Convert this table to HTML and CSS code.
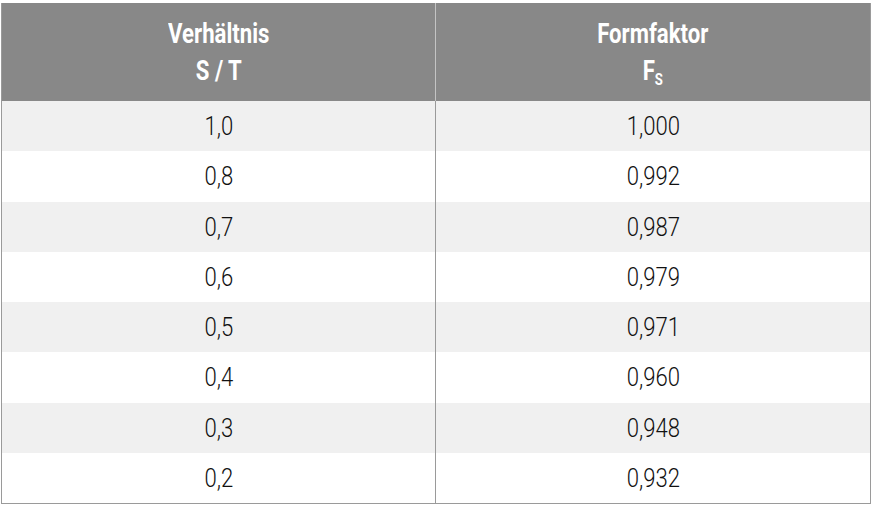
FILE: index.html
```html
<!DOCTYPE html>
<html lang="de">
<head>
<meta charset="utf-8">
<title>Formfaktor</title>
<link rel="stylesheet" href="styles.css">
</head>
<body>
<div class="table">
  <div class="cell head"><span class="txt">Verhältnis<br>S / T</span></div>
  <div class="cell head right"><span class="txt">Formfaktor<br>F<sub>S</sub></span></div>

  <div class="cell odd"><span class="txt">1,0</span></div>
  <div class="cell odd right"><span class="txt">1,000</span></div>
  <div class="cell"><span class="txt">0,8</span></div>
  <div class="cell right"><span class="txt">0,992</span></div>
  <div class="cell odd"><span class="txt">0,7</span></div>
  <div class="cell odd right"><span class="txt">0,987</span></div>
  <div class="cell"><span class="txt">0,6</span></div>
  <div class="cell right"><span class="txt">0,979</span></div>
  <div class="cell odd"><span class="txt">0,5</span></div>
  <div class="cell odd right"><span class="txt">0,971</span></div>
  <div class="cell"><span class="txt">0,4</span></div>
  <div class="cell right"><span class="txt">0,960</span></div>
  <div class="cell odd"><span class="txt">0,3</span></div>
  <div class="cell odd right"><span class="txt">0,948</span></div>
  <div class="cell"><span class="txt">0,2</span></div>
  <div class="cell right"><span class="txt">0,932</span></div>
</div>
</body>
</html>
```
FILE: styles.css
```css
html, body {
  margin: 0;
  padding: 0;
  background: #ffffff;
}

body {
  padding: 3px 1px 0 1px;
  font-family: Roboto, "Liberation Sans", sans-serif;
}

.table {
  width: 870px;
  box-sizing: border-box;
  border: 1px solid #9a9a9a;
  border-top: none;
  display: grid;
  grid-template-columns: 433px 1fr;
  grid-template-rows: 98px repeat(8, 50.25px);
}

.cell {
  display: flex;
  align-items: center;
  justify-content: center;
  background: #ffffff;
  color: #111111;
  font-weight: 300;
  font-size: 26px;
  line-height: 1;
}

.cell.odd {
  background: #f0f0f0;
}

.cell.right {
  border-left: 1px solid #9a9a9a;
}

.cell.head {
  background: #888888;
  color: #ffffff;
  font-weight: 700;
  font-size: 27px;
  line-height: 37px;
  text-align: center;
}

.cell.head.right {
  border-left: 1px solid #c4c4c4;
}

.txt {
  display: inline-block;
  transform: scaleX(0.85);
}

.head .txt {
  padding-top: 2px;
  transform: scaleX(0.82);
}

sub {
  font-size: 16px;
  line-height: 0;
  vertical-align: -5px;
}
```
